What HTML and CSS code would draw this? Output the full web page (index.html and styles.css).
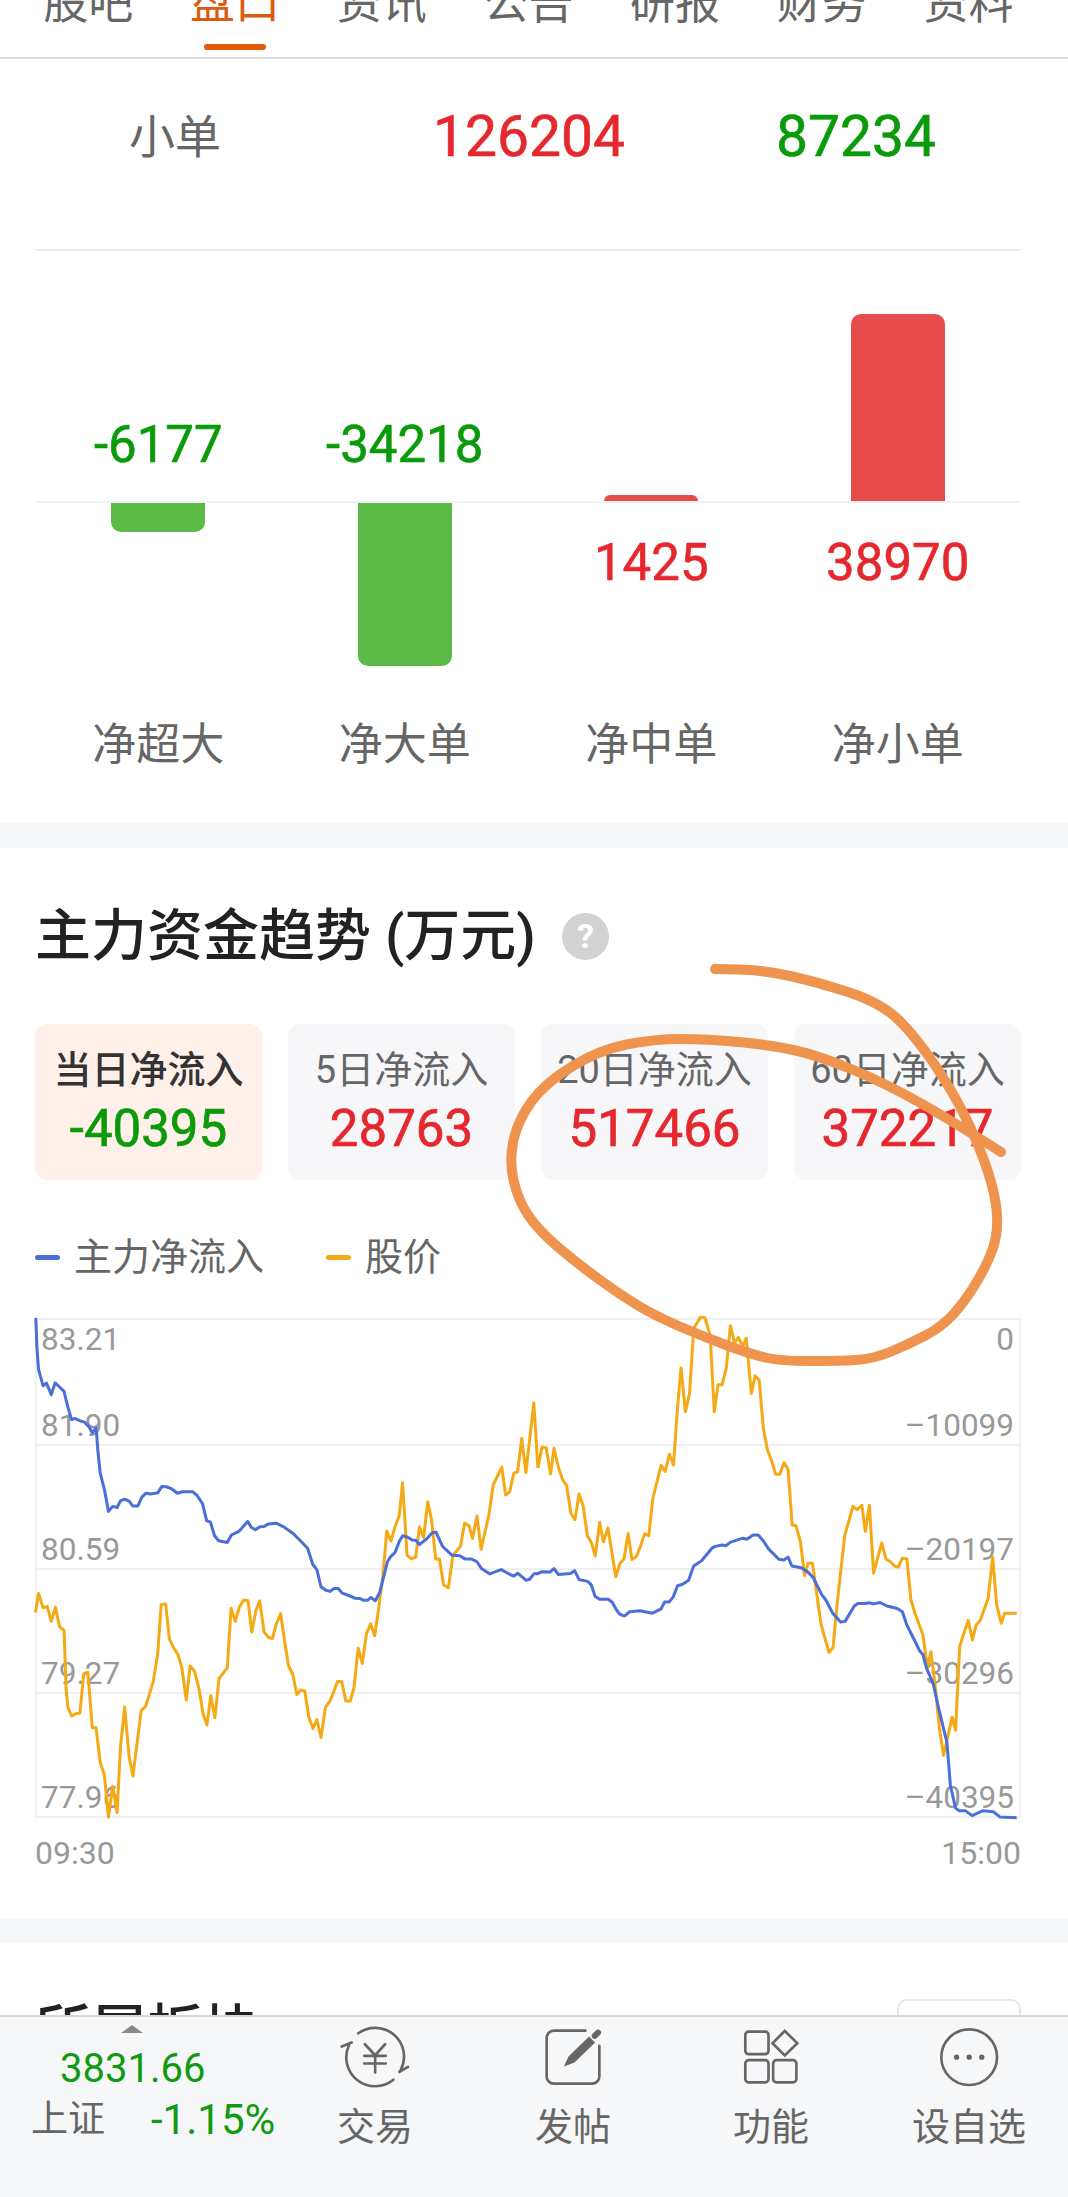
FILE: index.html
```html
<!DOCTYPE html>
<html lang="zh-CN">
<head>
<meta charset="UTF-8">
<title>盘口</title>
<link rel="stylesheet" href="styles.css">
</head>
<body>

<main class="page">

<nav class="tabs">
<div class="tab">股吧</div>
<div class="tab active">盘口</div>
<div class="tab">资讯</div>
<div class="tab">公告</div>
<div class="tab">研报</div>
<div class="tab">财务</div>
<div class="tab">资料</div>
</nav>

<section class="flowSection">

<div class="orderRow">
<span class="orderName">小单</span>
<span class="orderNum up">126204</span>
<span class="orderNum down">87234</span>
</div>

<div class="barsUp">
<div class="barCell"><b class="barNum down">-6177</b></div>
<div class="barCell"><b class="barNum down">-34218</b></div>
<div class="barCell"><i class="bar redBar smallBar"></i></div>
<div class="barCell"><i class="bar redBar hugeBar"></i></div>
</div>

<div class="barsDown">
<div class="barCell"><i class="bar greenBar shortBar"></i></div>
<div class="barCell"><i class="bar greenBar longBar"></i></div>
<div class="barCell"><b class="barNum up">1425</b></div>
<div class="barCell"><b class="barNum up">38970</b></div>
</div>

<div class="barLabels">
<span>净超大</span>
<span>净大单</span>
<span>净中单</span>
<span>净小单</span>
</div>

</section>

<section class="trendSection">

<h2 class="secTitle">主力资金趋势 (万元)<span class="helpIcon">?</span></h2>

<div class="cards">
<div class="card current"><p>当日净流入</p><b class="down">-40395</b></div>
<div class="card"><p>5日净流入</p><b class="up">28763</b></div>
<div class="card"><p>20日净流入</p><b class="up">517466</b></div>
<div class="card"><p>60日净流入</p><b class="up">372217</b></div>
</div>

<div class="legend">
<span class="legendItem"><i class="swatch blue"></i>主力净流入</span>
<span class="legendItem"><i class="swatch orange"></i>股价</span>
</div>

<div class="chart">
<div class="gridRow firstRow">
<div class="axisLine"><span>83.21</span><span>0</span></div>
<div class="axisLine"><span>81.90</span><span>–10099</span></div>
</div>
<div class="gridRow"><div class="axisLine"><span>80.59</span><span>–20197</span></div></div>
<div class="gridRow"><div class="axisLine"><span>79.27</span><span>–30296</span></div></div>
<div class="gridRow"><div class="axisLine"><span>77.96</span><span>–40395</span></div></div>

<svg class="lines" viewBox="35 1318 986 500">
<g transform="translate(0 1300) scale(.3444 .3571)" fill="none" stroke="#f4a915">
<polyline points="103,875 112,822 125,862 137,858 149,900 161,860 173,915 186,925 192,1090 197,1140 208,1165 222,1158 232,1157 243,1047 255,1042 268,1198 279,1198 291,1295 303,1330 315,1448 327,1362 340,1435 350,1250 362,1140 375,1280 386,1333 400,1225 410,1150 423,1138 445,1068 458,990 468,853 481,851 492,950 505,975 517,993 528,1030 541,1120 552,1025 565,1040 578,1090 590,1160 601,1190 612,1108 624,1170 636,1060 660,1030 671,863 683,900 695,860 708,840 720,842 731,930 743,870 754,842 767,930 780,945 791,948 802,908 815,878 827,960 838,1025 850,1048 862,1105 873,1092 885,1095 897,1170 909,1200 920,1175 932,1225 945,1140 957,1125 968,1100 980,1068 992,1068 1004,1123 1017,1123 1028,1085 1040,975 1052,1018 1064,935 1076,907 1088,940 1100,860 1112,770 1123,647 1135,675 1147,635 1159,605 1169,512 1182,715 1195,725 1207,720 1218,635 1230,665 1242,565 1253,615 1265,725 1276,725 1288,798 1302,806 1315,715 1337,690 1349,625 1362,632 1372,668 1385,605 1397,698 1420,600 1432,518 1457,468 1468,546 1480,537 1492,485 1503,481 1515,388 1527,483 1550,288 1562,470"/>
</g>
<g transform="translate(530 1300) scale(.3432 .3571)" fill="none" stroke="#f4a915">
<polyline points="23,470 35,412 47,414 60,487 70,415 83,470 95,503 107,520 119,597 131,615 143,543 155,577 167,660 179,680 190,717 203,623 214,677 227,638 250,775 262,738 274,725 286,654 297,727 310,718 322,690 334,655 346,660 358,555 382,463 394,480 406,432 418,462 430,300 440,190 453,313 465,260 477,80 497,48 510,50 525,100 537,313 548,237 560,237 572,190 584,72 596,120 607,105 620,130 630,107 645,262 656,212 668,225 680,360 692,420 704,450 716,488 728,488 740,455 752,475 764,630 775,632 788,677 800,772 810,737 823,737 848,908 871,987 883,973 895,850 917,660 941,578 953,587 967,575 977,648 989,575 1001,765 1025,680 1037,725 1050,733 1062,745 1073,748 1085,723 1098,725 1110,840 1122,878 1145,938 1158,1030 1168,985 1180,1075 1193,1200 1205,1275 1217,1225 1230,1168 1240,1205 1252,970 1277,897 1289,952 1300,910 1312,897 1335,835 1348,720 1360,855 1373,905 1383,877 1418,877"/>
</g>
<g transform="translate(0 1300) scale(.3444 .3571)" fill="none" stroke="#4a6fd8">
<polyline points="104,50 107,130 112,195 125,240 135,233 149,265 160,232 172,243 186,256 197,300 208,335 218,332 232,338 245,342 258,355 268,372 279,358 284,420 291,485 303,530 315,592 327,578 340,581 350,562 363,558 375,563 386,577 400,577 412,552 424,541 437,543 458,540 470,522 483,523 497,528 515,541 530,537 560,537 572,547 588,570 600,618 611,622 623,660 635,674 660,679 672,658 695,647 719,620 730,637 742,643 755,635 767,634 780,627 802,625 825,636 850,653 870,672 893,695 908,740 920,755 932,803 945,812 958,816 970,808 982,808 994,821 1017,829 1030,835 1045,836 1057,841 1067,841 1077,833 1090,842 1102,820 1114,775 1125,733 1135,718 1147,707 1160,675 1170,660 1185,665 1197,672 1207,673 1218,685 1240,668 1255,652 1266,650 1285,690 1313,715 1335,716 1350,725 1368,725 1385,733 1398,752 1422,767 1455,755 1480,768 1492,773 1503,765 1528,785 1538,782 1550,767"/>
</g>
<g transform="translate(530 1300) scale(.3432 .3571)" fill="none" stroke="#4a6fd8">
<polyline points="10,765 20,767 35,761 58,762 70,752 83,769 118,766 130,758 143,783 168,788 178,797 190,830 203,838 228,838 240,847 252,868 262,880 275,885 290,873 320,870 357,877 382,865 392,846 405,846 417,832 430,800 445,796 462,785 477,745 500,730 530,695 540,690 560,686 570,688 585,678 620,667 632,670 650,658 665,658 680,675 695,697 725,726 740,728 752,720 763,745 790,750 810,762 825,777 850,825 862,840 882,877 905,902 918,900 945,857 955,850 975,850 990,848 1000,851 1020,847 1040,857 1070,864 1085,873 1098,910 1125,962 1135,982 1145,993 1155,1030 1175,1075 1190,1140 1215,1240 1225,1360 1240,1423 1250,1430 1268,1430 1288,1444 1320,1430 1350,1433 1370,1448 1418,1450"/>
</g>
</svg>
</div>

<div class="timeAxis"><span>09:30</span><span>15:00</span></div>

</section>

<section class="nextSection">
<h2 class="secTitle">所属板块</h2>
<div class="moreBtn"></div>
</section>

</main>

<footer class="bottomBar">

<div class="indexBox">
<i class="arrowUp"></i>
<div class="indexPrice">3831.66</div>
<div class="indexRow"><span>上证</span><b>-1.15%</b></div>
</div>

<div class="navItem">
<svg class="navIcon" viewBox="55 30 215 190">
<path d="M112 52A87 87 0 0 1 240 163M236 168L262 153M218 192A87 87 0 0 1 84 88M62 92L92 80M132 85L163 118L193 85M130 120H195M130 143H195M163 118V170"/>
</svg>
<span>交易</span>
</div>

<div class="navItem">
<svg class="navIcon" viewBox="650 30 215 190">
<path d="M795 44H700a22 22 0 0 0-22 22V182a22 22 0 0 0 22 22H815a22 22 0 0 0 22-22V90"/>
<path class="solid" d="M730 152L744 122L806 62L824 80L762 140Z"/>
<path class="thick" d="M823 60L833 50"/>
</svg>
<span>发帖</span>
</div>

<div class="navItem">
<svg class="navIcon" viewBox="105 30 215 190">
<rect x="135" y="47" width="70" height="68" rx="10"/>
<rect x="135" y="133" width="70" height="67" rx="10"/>
<rect x="219" y="133" width="70" height="67" rx="10"/>
<path d="M254 45L292 82L254 119L217 82Z"/>
</svg>
<span>功能</span>
</div>

<div class="navItem">
<svg class="navIcon" viewBox="697 30 215 190">
<circle cx="805" cy="124" r="84"/>
<circle class="solid" cx="767" cy="124" r="8"/>
<circle class="solid" cx="805" cy="124" r="8"/>
<circle class="solid" cx="843" cy="124" r="8"/>
</svg>
<span>设自选</span>
</div>

</footer>

<!-- hand drawn mark on top of the screenshot -->
<svg class="scribble" viewBox="0 0 1068 2197">
<path d="M715 969L739 969.5Q763 970 790 976Q817 982 848 992Q879 1002 896 1017.5Q913 1033 933.5 1063Q954 1093 967.5 1121.5Q981 1150 988.5 1173.5Q996 1197 997 1215Q998 1233 993 1248Q988 1263 977 1281.5Q966 1300 954 1313.5Q942 1327 924.5 1336Q907 1345 890 1352Q873 1359 856 1360Q839 1361 809.5 1361Q780 1361 765 1357.5Q750 1354 726 1345Q702 1336 681 1327Q660 1318 644 1309Q628 1300 603.5 1282.5Q579 1265 558.5 1247.5Q538 1230 528 1215Q518 1200 513.5 1180Q509 1160 513.5 1140Q518 1120 531.5 1101.5Q545 1083 572 1066.5Q599 1050 626.5 1044.5Q654 1039 681 1039Q708 1039 739 1042Q770 1045 793.5 1050Q817 1055 851 1069Q885 1083 919.5 1102.5Q954 1122 1001 1152"/>
</svg>

</body>
</html>
```

FILE: styles.css
```css
*,*:before,*:after{
margin: 0;
padding: 0;
box-sizing: border-box;
}

html,body{
width: 1068px;
height: 2197px;
overflow: hidden;
background: #fff;
}

body{
position: relative;
display: flex;
flex-direction: column;
font-family: Roboto, "Noto Sans CJK SC", sans-serif;
color: #666;
}

i{
display: block;
}

.up{
color: #e5282e;
}

.down{
color: #0a9a0a;
}


/* page area, cut off by the bottom bar */
.page{
height: 2015px;
overflow: hidden;
}


.tabs{
display: flex;
margin-top: -33px;
padding-left: 15px;
height: 92px;
border-bottom: 2px solid #ddd;
}

.tab{
width: 146.7px;
font-size: 45px;
line-height: 74px;
text-align: center;
}

.tab.active{
color: #dd5a10;
}

.tab.active:after{
content: "";
display: block;
margin: 3px auto 0;
width: 62px;
height: 6px;
background: #e25a0a;
border-radius: 3px;
}


.flowSection{
padding: 0 47px 0 35px;
height: 764px;
}

.orderRow{
display: grid;
grid-template-columns: 280px 428px 226px;
padding-top: 50px;
height: 192px;
border-bottom: 2px solid #eee;
text-align: center;
line-height: 56px;
}

.orderName{
font-size: 46px;
}

.orderNum{
font-size: 57px;
font-weight: 400;
-webkit-text-stroke: .6px currentColor;
}


.barsUp,.barsDown,.barLabels{
display: grid;
grid-template-columns: repeat(4, 1fr);
}

.barsUp{
height: 252px;
border-bottom: 2px solid #f2f2f2;
}

.barsDown{
height: 212px;
}

.barCell{
display: flex;
flex-direction: column;
align-items: center;
}

.barsUp .barCell{
justify-content: flex-end;
}

.barNum{
font-size: 51px;
font-weight: 400;
line-height: 56px;
-webkit-text-stroke: .6px currentColor;
}

.barsUp .barNum{
margin-bottom: 28px;
}

.barsDown .barNum{
margin-top: 32px;
}

.bar{
width: 94px;
}

.redBar{
background: #e84b4b;
border-radius: 10px 10px 0 0;
}

.greenBar{
background: #5cba47;
border-radius: 0 0 10px 10px;
}

.smallBar{
height: 6px;
}

.hugeBar{
height: 187px;
}

.shortBar{
height: 29px;
}

.longBar{
height: 163px;
}

.barLabels{
font-size: 44px;
line-height: 60px;
text-align: center;
}


.trendSection{
padding: 53px 47px 0 35px;
height: 1095px;
border-top: 25px solid #f6f7f9;
}

.secTitle{
display: flex;
align-items: center;
gap: 26px;
font-size: 56px;
font-weight: 500;
line-height: 70px;
color: #222;
white-space: pre;
}

.helpIcon{
width: 47px;
height: 47px;
background: #d2d2d4;
border-radius: 50%;
color: #fff;
font-size: 34px;
font-weight: 700;
line-height: 47px;
text-align: center;
}


.cards{
display: grid;
grid-template-columns: repeat(4, 1fr);
gap: 26px;
margin-top: 53px;
}

.card{
padding-top: 24px;
height: 156px;
background: #f7f7fa;
border-radius: 12px;
text-align: center;
}

.card p{
font-size: 38px;
line-height: 44px;
}

.card b{
display: block;
margin-top: 7px;
font-size: 51px;
font-weight: 400;
line-height: 60px;
-webkit-text-stroke: .7px currentColor;
}

.card.current{
background: #fff0ea;
}

.card.current p{
color: #333;
font-weight: 500;
}


.legend{
display: flex;
gap: 62px;
margin-top: 55px;
font-size: 38px;
line-height: 44px;
}

.legendItem{
display: flex;
align-items: center;
gap: 14px;
}

.swatch{
width: 25px;
height: 5px;
border-radius: 3px;
}

.blue{
background: #4a6fd8;
}

.orange{
background: #f4a915;
}


.chart{
position: relative;
display: flex;
flex-direction: column;
margin-top: 39px;
height: 500px;
border: 2px solid #f0f0f0;
}

.gridRow{
display: flex;
flex-direction: column;
justify-content: flex-end;
flex: 1;
border-bottom: 2px solid #f0f0f0;
}

.gridRow:last-of-type{
border-bottom: none;
}

.firstRow{
justify-content: space-between;
padding-top: 2px;
}

.axisLine{
display: flex;
justify-content: space-between;
padding: 0 5px 0 4px;
font-size: 31.5px;
line-height: 36px;
color: #999;
}

.lines{
position: absolute;
left: -2px;
top: -2px;
width: 986px;
height: 500px;
overflow: visible;
}

.lines polyline{
stroke-width: 3px;
vector-effect: non-scaling-stroke;
stroke-linejoin: round;
}

.timeAxis{
display: flex;
justify-content: space-between;
margin-top: 16px;
font-size: 32px;
line-height: 38px;
color: #999;
}


.nextSection{
display: flex;
justify-content: space-between;
padding: 53px 47px 0 35px;
border-top: 25px solid #f6f7f9;
}

.moreBtn{
margin-top: 3px;
width: 124px;
height: 60px;
border: 2px solid #e8e8e8;
border-radius: 10px;
}


.bottomBar{
display: grid;
grid-template-columns: 276px repeat(4, 1fr);
flex: 1;
background: #f6f7f9;
border-top: 2px solid #d8d8d8;
}

.indexBox{
padding: 8px 0 0 31px;
}

.arrowUp{
margin-left: 90px;
width: 0;
height: 0;
border: 11px solid transparent;
border-top: none;
border-bottom: 8px solid #8a8a8a;
}

.indexPrice{
margin-top: 14px;
padding-left: 29px;
font-size: 40px;
line-height: 44px;
color: #109a10;
}

.indexRow{
display: flex;
gap: 46px;
margin-top: 7px;
font-size: 37px;
line-height: 44px;
}

.indexRow b{
font-size: 42px;
font-weight: 400;
color: #109a10;
}

.navItem{
display: flex;
flex-direction: column;
align-items: center;
padding-top: 9px;
font-size: 38px;
line-height: 36px;
}

.navIcon{
margin-bottom: 20px;
width: 72px;
height: 63px;
}

.navIcon *{
fill: none;
stroke: #666;
stroke-width: 8;
stroke-linecap: round;
}

.navIcon .solid{
fill: #666;
stroke: none;
}

.navIcon .thick{
stroke-width: 18;
}


.scribble{
position: absolute;
left: 0;
top: 0;
width: 1068px;
height: 2197px;
fill: none;
stroke: #ef944f;
stroke-width: 10;
stroke-linecap: round;
stroke-linejoin: round;
pointer-events: none;
}
```
